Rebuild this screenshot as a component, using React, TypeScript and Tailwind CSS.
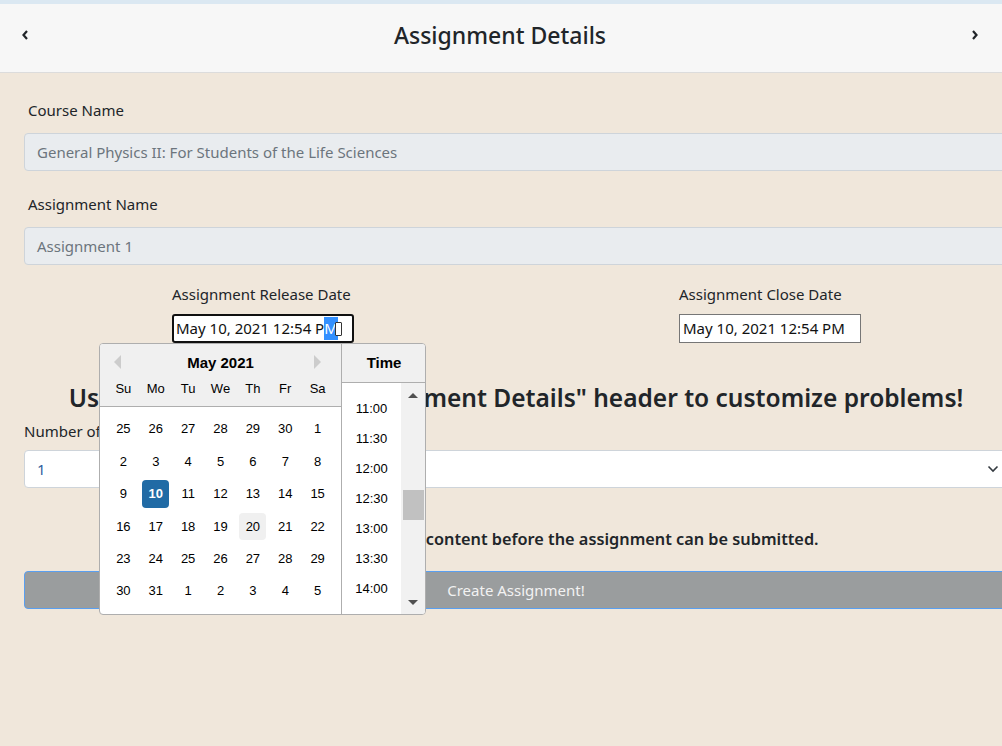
import React from 'react'

const weeks = [
  [25, 26, 27, 28, 29, 30, 1],
  [2, 3, 4, 5, 6, 7, 8],
  [9, 10, 11, 12, 13, 14, 15],
  [16, 17, 18, 19, 20, 21, 22],
  [23, 24, 25, 26, 27, 28, 29],
  [30, 31, 1, 2, 3, 4, 5],
]

const dayNames = ['Su', 'Mo', 'Tu', 'We', 'Th', 'Fr', 'Sa']
const times = ['11:00', '11:30', '12:00', '12:30', '13:00', '13:30', '14:00', '14:30']

function Chevron({ dir }: { dir: 'left' | 'right' }) {
  return (
    <svg width="9" height="12" viewBox="0 0 9 12" className="text-[#212529]">
      <path
        d={dir === 'left' ? 'M6 2 L2.5 6 L6 10' : 'M3 2 L6.5 6 L3 10'}
        fill="none"
        stroke="currentColor"
        strokeWidth="2.2"
      />
    </svg>
  )
}

function DatePickerPopup() {
  return (
    <div className="absolute left-[-73px] top-[29px] z-10 flex h-[272px] w-[327px] overflow-hidden rounded-[4px] border border-[#aeaeae] bg-white font-['Liberation_Sans',Arial,sans-serif] text-[#000]">
      <div className="w-[241px] shrink-0">
        <div className="relative h-[63px] border-b border-[#aeaeae] bg-[#f0f0f0]">
          <div className="absolute left-[14px] top-[11px] h-0 w-0 border-y-[7px] border-r-[7px] border-y-transparent border-r-[#ccc]" />
          <div className="absolute left-[214px] top-[11px] h-0 w-0 border-y-[7px] border-l-[7px] border-y-transparent border-l-[#ccc]" />
          <div className="pt-[9px] text-center text-[15px] font-bold leading-[20px]">May 2021</div>
          <div className="mt-[6px] flex justify-center text-[13px] leading-[20px] text-[#000]">
            {dayNames.map((d) => (
              <div key={d} className="mx-[2.6px] w-[27.2px] text-center">
                {d}
              </div>
            ))}
          </div>
        </div>
        <div className="mt-[6px] flex flex-col items-center">
          {weeks.map((week, wi) => (
            <div key={wi} className="flex">
              {week.map((day, di) => {
                const selected = wi === 2 && day === 10
                const keyboard = wi === 3 && day === 20
                return (
                  <div
                    key={di}
                    className={`m-[2.6px] flex h-[27.2px] w-[27.2px] items-center justify-center rounded-[4px] text-[13px] ${
                      selected
                        ? 'bg-[#216ba5] font-bold text-white'
                        : keyboard
                          ? 'bg-[#f0f0f0] text-[#000]'
                          : ''
                    }`}
                  >
                    {day}
                  </div>
                )
              })}
            </div>
          ))}
        </div>
      </div>
      <div className="flex w-[85px] shrink-0 flex-col border-l border-[#aeaeae]">
        <div className="flex h-[39px] shrink-0 items-center justify-center border-b border-[#aeaeae] bg-[#f0f0f0] text-[15px] font-bold">
          Time
        </div>
        <div className="flex min-h-0 flex-1">
          <div className="flex-1 overflow-hidden pt-[11px]">
            {times.map((t) => (
              <div key={t} className="flex h-[30px] items-center justify-center text-[13px]">
                {t}
              </div>
            ))}
          </div>
          <div className="relative w-[25px] shrink-0 bg-[#f1f1f1]">
            <div className="absolute left-[7px] top-[10px] h-0 w-0 border-x-[5px] border-b-[5px] border-x-transparent border-b-[#505050]" />
            <div className="absolute left-[2px] top-[107px] h-[30px] w-[21px] bg-[#c1c1c1]" />
            <div className="absolute bottom-[9px] left-[7px] h-0 w-0 border-x-[5px] border-t-[5px] border-x-transparent border-t-[#505050]" />
          </div>
        </div>
      </div>
    </div>
  )
}

export default function App() {
  return (
    <div className="h-[746px] w-[1002px] overflow-hidden bg-[#f0e7db] font-['Noto_Sans','Open_Sans',sans-serif] text-[#212529]">
      <div className="h-[4px] bg-[#dbe8f2]" />
      <header className="flex h-[69px] items-center justify-between border-b border-[#dcdcdc] bg-[#f7f7f7] pb-[6px] pl-[21px] pr-[23px]">
        <Chevron dir="left" />
        <h1 className="text-[23px] font-medium">Assignment Details</h1>
        <Chevron dir="right" />
      </header>

      <main className="ml-[24px] w-[984px]">
        <label className="mt-[26px] block pl-[4px] text-[15px] leading-[22px]">Course Name</label>
        <div className="mt-[12px] flex h-[38px] items-center rounded-[4px] border border-[#ced4da] bg-[#e9ecef] px-[12px] text-[15px] text-[#6c757d]">
          General Physics II: For Students of the Life Sciences
        </div>

        <label className="mt-[22px] block pl-[4px] text-[15px] leading-[22px]">Assignment Name</label>
        <div className="mt-[12px] flex h-[38px] items-center rounded-[4px] border border-[#ced4da] bg-[#e9ecef] px-[12px] text-[15px] text-[#6c757d]">
          Assignment 1
        </div>

        <div className="mt-[18px] grid grid-cols-2">
          <div className="pl-[148px]">
            <div className="text-[15px] leading-[22px]">Assignment Release Date</div>
            <div className="relative mt-[9px] w-[182px]">
              <div className="flex h-[29px] w-[182px] items-center rounded-[3px] border-2 border-[#101010] bg-white pl-[2px] text-[15px] text-[#111]">
                <span>May 10, 2021 12:54 P</span>
                <span className="bg-[#3390ff] text-white">M</span>
                <span className="ml-[-3px] h-[14px] w-[7px] rounded-[1px] border border-[#333] bg-white" />
              </div>
              <DatePickerPopup />
            </div>
          </div>
          <div className="pl-[163px]">
            <div className="text-[15px] leading-[22px]">Assignment Close Date</div>
            <div className="mt-[9px] flex h-[29px] w-[182px] items-center border border-[#767676] bg-white pl-[3px] text-[15px] text-[#111]">
              May 10, 2021 12:54 PM
            </div>
          </div>
        </div>

        <h2 className="mt-[39px] text-center text-[24.5px] font-semibold leading-[32px]">
          Use the arrows by the "Assignment Details" header to customize problems!
        </h2>

        <label className="mt-[6px] block text-[15px] leading-[22px]">Number of Problems</label>
        <div className="mt-[8px] flex h-[38px] items-center justify-between rounded-[4px] border border-[#ced4da] bg-white pl-[12px] pr-[8px] text-[15px] text-[#2f5f9e]">
          <span>1</span>
          <svg width="12" height="8" viewBox="0 0 12 8">
            <path d="M1.5 1.5 L6 6 L10.5 1.5" fill="none" stroke="#343a40" strokeWidth="1.6" />
          </svg>
        </div>

        <p className="mt-[40px] text-center text-[16.3px] font-semibold leading-[22px]">
          All problems must contain content before the assignment can be submitted.
        </p>

        <button
          type="button"
          className="mt-[21px] flex h-[38px] w-full items-center justify-center rounded-[4px] border border-[#5a9ff0] bg-[#9a9d9e] text-[15px] text-[#f2f2f2]"
        >
          Create Assignment!
        </button>
      </main>
    </div>
  )
}
